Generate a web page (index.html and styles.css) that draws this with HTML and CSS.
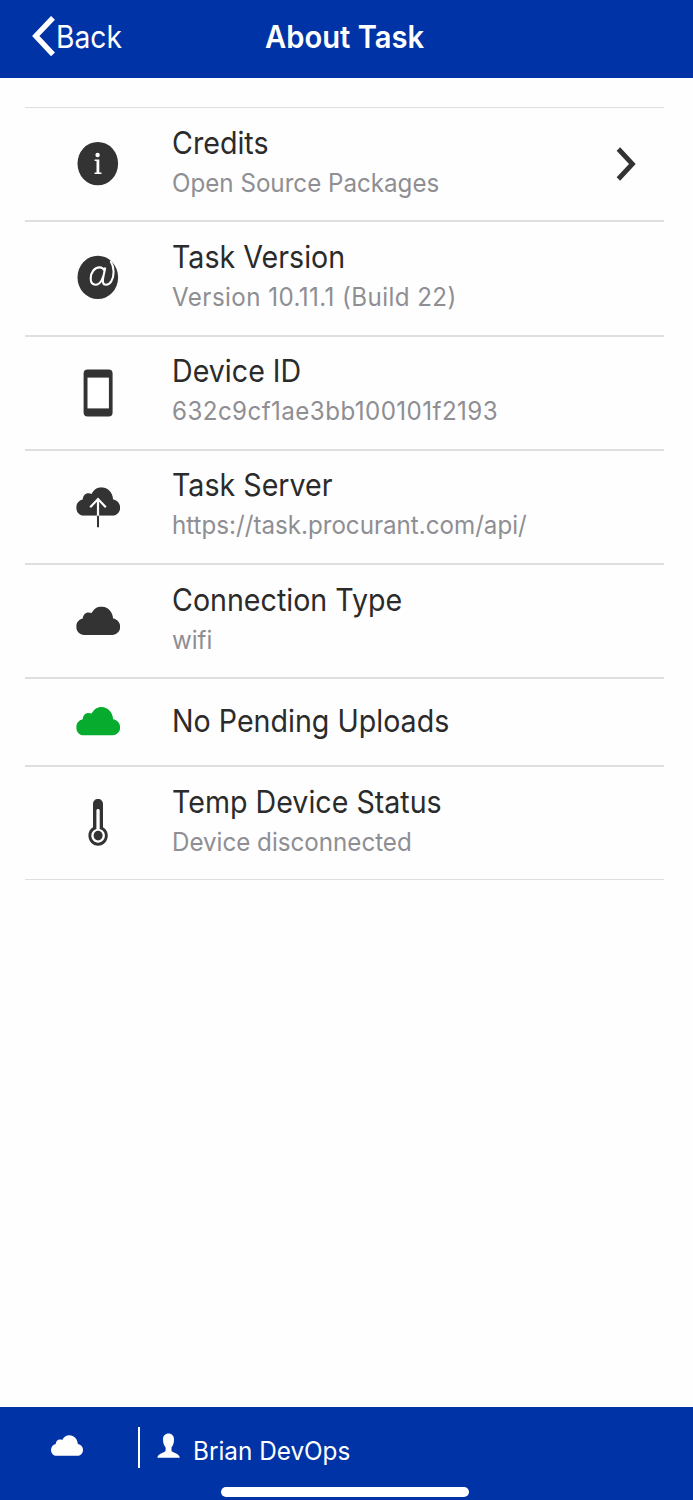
FILE: index.html
```html
<!DOCTYPE html>
<html lang="en">
<head>
    <meta charset="UTF-8">
    <meta name="viewport" content="width=device-width, initial-scale=1.0">
    <title>About Task</title>
    <link rel="stylesheet" href="styles.css">
</head>
<body>
    <svg class="defs" width="0" height="0">
        <symbol id="cloud" viewBox="0 0 44 28.5">
            <path d="M8 28.5C3.5 28.5 0 25 0 20.4C0 16.4 2.6 13 6.5 12.2C6.7 8.6 9 6 12.2 6C13.4 6 14.5 6.2 15.4 6.6C17.4 2.6 21 0 25.3 0C31.5 0 36.5 5 36.9 12.2C41 12.8 44 16.3 44 20.3C44 25 40.3 28.5 36 28.5Z"/>
        </symbol>
    </svg>

    <header class="header">
        <a class="back" href="#">
            <svg width="23" height="42" viewBox="0 0 23 42"><path d="M21 1.8L3.8 20L21 38.4"/></svg>
            <span>Back</span>
        </a>
        <h1>About Task</h1>
    </header>

    <main>
        <ul class="list">
            <li class="row">
                <svg class="icon" viewBox="0 0 48 48">
                    <ellipse cx="23.8" cy="23.6" rx="20.3" ry="21.7"/>
                    <circle class="hole" cx="23.6" cy="15" r="2.2"/>
                    <path class="hole" d="M20.6 19.6H25.3V32.4H27.5V34H20.6V32.4H22.5V21.1H20.6Z"/>
                </svg>
                <div class="text">
                    <h2>Credits</h2>
                    <p>Open Source Packages</p>
                </div>
                <svg class="chevron" width="22" height="36" viewBox="0 0 22 36"><path d="M2.4 3L16.4 18L2.4 33"/></svg>
            </li>
            <li class="row">
                <svg class="icon" viewBox="0 0 48 48">
                    <ellipse cx="23.8" cy="23.4" rx="20.3" ry="21.7"/>
                    <path class="line at" d="M30.6 17.2C29.8 14.7 28 13.4 25.4 13.4C20.4 13.4 16.7 18.7 16.7 24.3C16.7 28.4 18.6 30.7 21.6 30.7C26.6 30.7 29.8 23 31.2 13.6M31.2 13.6C30.2 19.2 28.9 23.5 28.9 27C28.9 29.6 30 30.8 32 30.8C36.4 30.8 39.6 25 39.6 17.8C39.6 13.7 38.7 10.4 36.6 7"/>
                </svg>
                <div class="text">
                    <h2>Task Version</h2>
                    <p class="digits">Version 10.11.1 (Build 22)</p>
                </div>
            </li>
            <li class="row">
                <svg class="icon" viewBox="0 0 48 48">
                    <rect x="9.6" y=".4" width="29" height="47" rx="4"/>
                    <rect class="hole" x="13.5" y="8.6" width="21.4" height="30.8"/>
                </svg>
                <div class="text">
                    <h2>Device ID</h2>
                    <p class="digits">632c9cf1ae3bb100101f2193</p>
                </div>
            </li>
            <li class="row">
                <svg class="icon" viewBox="0 0 48 48">
                    <use href="#cloud" x="2.2" y="4.3" width="44" height="28.5"/>
                    <path class="line" d="M24 16V33M16.2 24.2L24 16L31.8 24.2"/>
                    <path class="stem" d="M24 32.8V44.2"/>
                </svg>
                <div class="text">
                    <h2>Task Server</h2>
                    <p>https://task.procurant.com/api/</p>
                </div>
            </li>
            <li class="row">
                <svg class="icon" viewBox="0 0 48 48">
                    <use href="#cloud" x="2.2" y="9.4" width="44" height="28.5"/>
                </svg>
                <div class="text">
                    <h2>Connection Type</h2>
                    <p>wifi</p>
                </div>
            </li>
            <li class="row short">
                <svg class="icon green" viewBox="0 0 48 48">
                    <use href="#cloud" x="2.2" y="9" width="44" height="28.5"/>
                </svg>
                <div class="text">
                    <h2>No Pending Uploads</h2>
                </div>
            </li>
            <li class="row last">
                <svg class="icon" viewBox="0 0 48 48">
                    <path d="M19 5C19 2.1 21 0 24 0S29 2.1 29 5V28.2C32 29.8 33.8 33 33.8 36.6C33.8 42.4 29.6 46.8 24.1 46.8S14.4 42.4 14.4 36.6C14.4 33 16 29.8 19 28.2Z"/>
                    <path class="hole" d="M22.4 11.4C22.4 9.4 25.7 9.4 25.7 11.4V30C28.8 30.8 30.9 33.4 30.9 36.6C30.9 40.7 27.9 43.7 24.1 43.7S17.3 40.7 17.3 36.6C17.3 33.4 19.4 30.8 22.4 30Z"/>
                    <ellipse cx="24.1" cy="36.6" rx="4.5" ry="4.9"/>
                </svg>
                <div class="text">
                    <h2>Temp Device Status</h2>
                    <p>Device disconnected</p>
                </div>
            </li>
        </ul>
    </main>

    <footer class="footer">
        <div class="sync">
            <svg width="32" height="21"><use href="#cloud" width="32" height="21"/></svg>
        </div>
        <div class="user">
            <svg width="24" height="26" viewBox="0 0 24 26"><path d="M11.5 .4C14.9 .4 17 2.8 17 6.3C17 10 16.2 12.2 14.5 14.6V17.6C14.5 19.8 22.6 20.2 22.8 24.8H.4C.6 20.2 8.6 19.8 8.6 17.6V14.6C6.9 12.2 6 10 6 6.3C6 2.8 8.1 .4 11.5 .4Z"/></svg>
            <span>Brian DevOps</span>
        </div>
        <div class="home-bar"></div>
    </footer>
</body>
</html>
```
FILE: styles.css
```css
* {
    box-sizing: border-box;
}

body {
    margin: 0;
    height: 1500px;
    display: flex;
    flex-direction: column;
    background-color: #fefefe;
    color: #2b2b2b;
    font-family: 'Inter', 'Liberation Sans', sans-serif;
    overflow: hidden;
}

.defs {
    position: absolute;
}

h1,
h2,
p {
    margin: 0;
    font-weight: 400;
    white-space: nowrap;
}

.header {
    height: 78px;
    display: grid;
    grid-template-columns: 1fr auto 1fr;
    align-items: center;
    padding: 0 35px 5px 32px;
    background-color: #0033a6;
    color: #fff;
}

.back {
    display: flex;
    align-items: center;
    gap: 1px;
    color: #fff;
    font-size: 31px;
    text-decoration: none;
}

.back span {
    transform: scaleX(0.91);
    transform-origin: left;
}

.back svg path {
    fill: none;
    stroke: #fff;
    stroke-width: 5.4;
}

.header h1 {
    font-size: 31px;
    font-weight: 600;
    transform: scaleX(0.94);
}

main {
    flex: 1;
    padding: 29px 29px 0 25px;
}

.list {
    margin: 0;
    padding: 0;
    list-style: none;
    border-top: 1px solid #dedede;
}

.row {
    height: 114.25px;
    display: flex;
    align-items: center;
    border-bottom: 2px solid #dfdfdf;
}

.row.short {
    height: 87.5px;
}

.row.last {
    height: 113.5px;
    border-bottom: 1px solid #dedede;
}

.icon {
    flex: none;
    width: 48px;
    height: 48px;
    margin: 0 50px 0 49px;
    fill: #333;
}

.icon.green {
    fill: #07ab2e;
}

.icon .hole {
    fill: #fff;
}

.icon .line {
    fill: none;
    stroke: #fff;
    stroke-width: 2.2;
}

.icon .at {
    stroke-width: 2.1;
}

.icon .stem {
    stroke: #333;
    stroke-width: 2;
}

.text {
    flex: 1;
    padding-bottom: 3px;
}

.text h2 {
    font-size: 31px;
    line-height: 40px;
    transform: scaleX(0.923);
    transform-origin: left;
}

.text p {
    font-size: 25.5px;
    line-height: 40px;
    color: #8e8e93;
    transform: scaleX(0.947);
    transform-origin: left;
}

.text .digits {
    letter-spacing: 0.45px;
}

.chevron {
    flex: none;
    margin-right: 26px;
}

.chevron path {
    fill: none;
    stroke: #333;
    stroke-width: 4.8;
}

.footer {
    position: relative;
    height: 93px;
    display: flex;
    align-items: flex-start;
    padding-top: 20px;
    background-color: #0033a6;
    color: #fff;
}

.footer svg {
    fill: #fff;
}

.sync {
    width: 140px;
    height: 41px;
    padding: 8px 0 0 51px;
    border-right: 2px solid #fff;
}

.user {
    display: flex;
    align-items: flex-start;
    gap: 12px;
    padding: 6px 0 0 17px;
}

.user span {
    font-size: 25.5px;
    line-height: 35px;
    transform: scaleX(0.953);
    transform-origin: left;
}

.home-bar {
    position: absolute;
    left: 221px;
    bottom: 3px;
    width: 248px;
    height: 10px;
    border-radius: 5px;
    background-color: #fff;
}
```
